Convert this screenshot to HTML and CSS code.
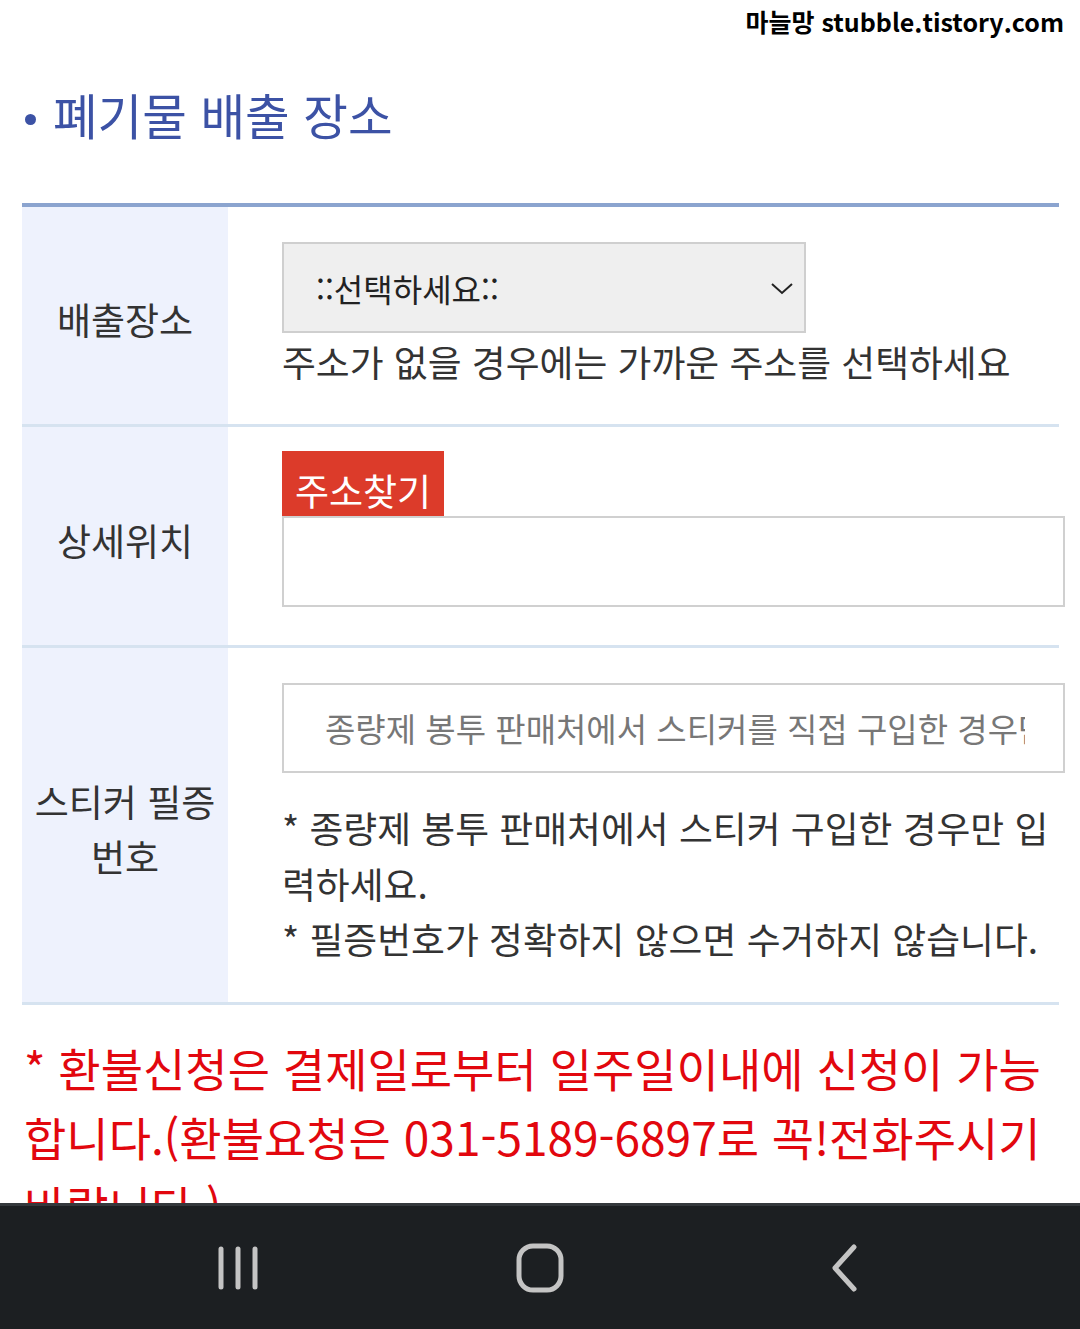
FILE: index.html
```html
<!DOCTYPE html>
<html lang="ko">
<head>
<meta charset="utf-8">
<title>폐기물 배출 장소</title>
<link rel="stylesheet" href="styles.css">
</head>
<body>
<div class="watermark">마늘망 stubble.tistory.com</div>
<main class="page">
  <h2 class="title"><span class="dot"></span>폐기물 배출 장소</h2>
  <div class="form">
    <div class="row">
      <div class="label">배출장소</div>
      <div class="cell cell-place">
        <div class="select">
          <span>::선택하세요::</span>
          <svg class="chev" width="24" height="14" viewBox="0 0 24 14"><path d="M2 2 L12 11 L22 2" fill="none" stroke="#222" stroke-width="2"/></svg>
        </div>
        <p class="help">주소가 없을 경우에는 가까운 주소를 선택하세요</p>
      </div>
    </div>
    <div class="row">
      <div class="label">상세위치</div>
      <div class="cell cell-detail">
        <div class="btn">주소찾기</div>
        <div class="input"></div>
      </div>
    </div>
    <div class="row">
      <div class="label">스티커 필증 번호</div>
      <div class="cell cell-sticker">
        <div class="input"><span class="ph">종량제 봉투 판매처에서 스티커를 직접 구입한 경우만 입력하세요</span></div>
        <p class="notes">* 종량제 봉투 판매처에서 스티커 구입한 경우만 입력하세요.<br>* 필증번호가 정확하지 않으면 수거하지 않습니다.</p>
      </div>
    </div>
  </div>
  <p class="refund">* 환불신청은 결제일로부터 일주일이내에 신청이 가능합니다.(환불요청은 031-5189-6897로 꼭!전화주시기 바랍니다.)</p>
</main>
<nav class="navbar">
  <svg class="nav-icon nav-recent" width="46" height="46" viewBox="0 0 46 46"><g stroke="#c4c4c4" stroke-width="5" stroke-linecap="round"><line x1="6" y1="4" x2="6" y2="42"/><line x1="23" y1="4" x2="23" y2="42"/><line x1="40" y1="4" x2="40" y2="42"/></g></svg>
  <svg class="nav-icon nav-home" width="48" height="50" viewBox="0 0 48 50"><rect x="3" y="3" width="42" height="44" rx="14" fill="none" stroke="#c4c4c4" stroke-width="5"/></svg>
  <svg class="nav-icon nav-back" width="30" height="48" viewBox="0 0 30 48"><path d="M25 3 L6 24 L25 45" fill="none" stroke="#c4c4c4" stroke-width="5" stroke-linecap="round" stroke-linejoin="round"/></svg>
</nav>
</body>
</html>
```

FILE: styles.css
```css
html, body {
  margin: 0;
  padding: 0;
  background: #ffffff;
}
body {
  font-family: "Noto Sans CJK KR", "Noto Sans", sans-serif;
  color: #333333;
  width: 1080px;
  height: 1329px;
  overflow: hidden;
  position: relative;
}
.watermark {
  position: absolute;
  top: 2px;
  right: 16px;
  font-size: 25px;
  font-weight: 700;
  color: #000;
  line-height: 38px;
}
.page {
  padding: 84px 21px 0 22px;
}
.title {
  margin: 0;
  display: flex;
  align-items: center;
  font-size: 48.5px;
  font-weight: 400;
  line-height: 61px;
  color: #3c52a5;
}
.dot {
  width: 11px;
  height: 11px;
  border-radius: 50%;
  background: #3c52a5;
  margin: 10px 17px 0 3px;
  flex: none;
}
.form {
  margin-top: 58px;
  border-top: 4px solid #8ba4cf;
}
.row {
  display: grid;
  grid-template-columns: 206px 1fr;
  border-bottom: 3px solid #d6e3f0;
}
.label {
  background: #eef2fd;
  display: flex;
  align-items: center;
  justify-content: center;
  text-align: center;
  font-size: 37px;
  line-height: 55px;
  color: #333;
  padding: 8px 10px 0;
}
.cell {
  padding: 35px 0 35px 54px;
}
.cell-detail {
  padding: 24px 0 38px 54px;
}
.select {
  width: 524px;
  height: 91px;
  box-sizing: border-box;
  border: 2px solid #cfcfcf;
  background: #efefef;
  display: flex;
  align-items: center;
  justify-content: space-between;
  padding: 0 10px 0 32px;
  font-size: 32px;
  color: #222;
}
.chev {
  margin-top: 2px;
}
.help {
  margin: 0;
  font-size: 36.8px;
  line-height: 56px;
  color: #333;
}
.btn {
  display: inline-block;
  vertical-align: top;
  height: 65px;
  box-sizing: border-box;
  padding: 13px 13px 0;
  background: #dc3b2a;
  color: #fff;
  font-size: 37px;
  line-height: 52px;
}
.input {
  width: 783px;
  height: 91px;
  box-sizing: border-box;
  border: 2px solid #d0d0d0;
  background: #fff;
  padding: 0 38px 0 41px;
  display: flex;
  align-items: center;
  overflow: hidden;
}
.cell-sticker .input {
  height: 90px;
}
.ph {
  font-size: 33px;
  color: #777;
  white-space: nowrap;
  overflow: hidden;
}
.notes {
  margin: 27px 0 0;
  font-size: 36.8px;
  line-height: 55.5px;
  color: #333;
}
.refund {
  margin: 28px 0 0;
  padding-left: 2px;
  font-size: 46px;
  line-height: 69px;
  color: #e2070e;
}
.navbar {
  position: fixed;
  left: 0;
  bottom: 0;
  width: 1080px;
  height: 126px;
  box-sizing: border-box;
  background: #1c1f22;
  border-top: 3px solid #34383c;
  display: flex;
  align-items: center;
}
.nav-icon {
  display: block;
  flex: none;
}
.nav-recent {
  margin-left: 215px;
}
.nav-home {
  margin-left: 255px;
}
.nav-back {
  margin-left: 265px;
}
```
